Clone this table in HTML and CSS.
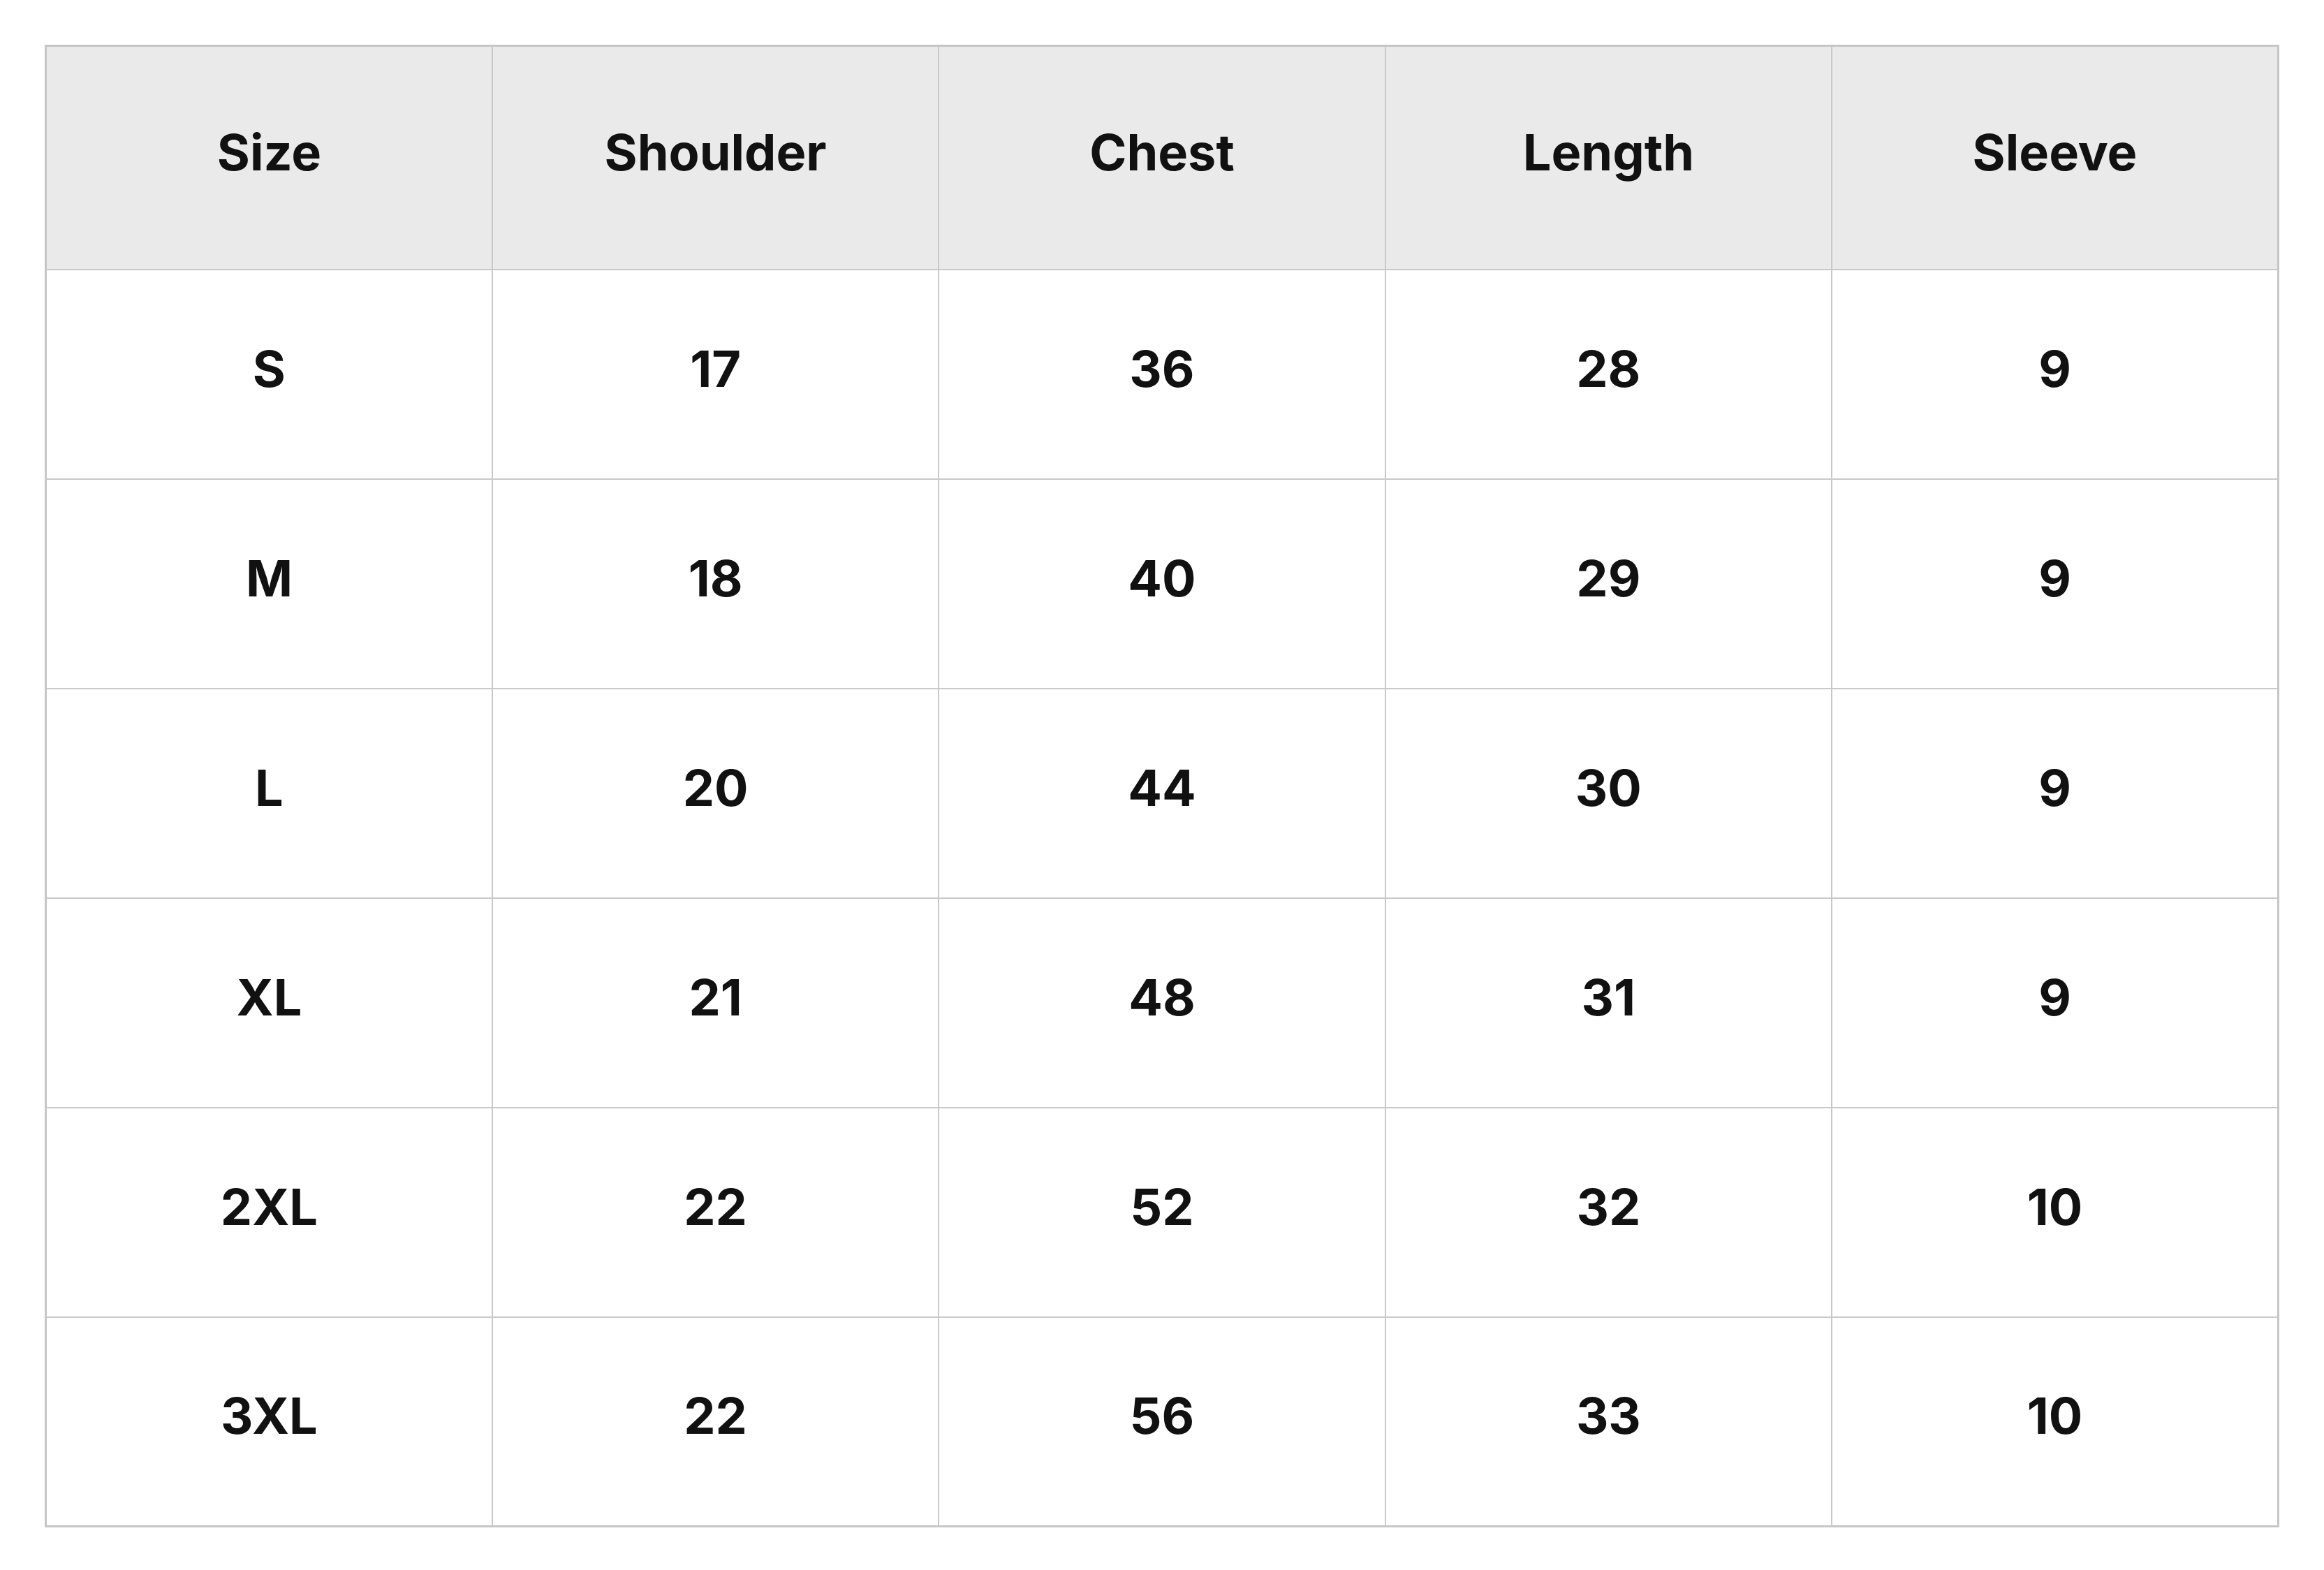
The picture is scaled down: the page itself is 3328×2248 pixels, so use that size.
FILE: index.html
```html
<!DOCTYPE html>
<html lang="en">
<head>
<meta charset="utf-8">
<title>Size Chart</title>
<link rel="stylesheet" href="styles.css">
</head>
<body>
<table class="size-table">
  <thead>
    <tr class="head-row">
      <th>Size</th><th>Shoulder</th><th>Chest</th><th>Length</th><th>Sleeve</th>
    </tr>
  </thead>
  <tbody>
    <tr><td>S</td><td>17</td><td>36</td><td>28</td><td>9</td></tr>
    <tr><td>M</td><td>18</td><td>40</td><td>29</td><td>9</td></tr>
    <tr><td>L</td><td>20</td><td>44</td><td>30</td><td>9</td></tr>
    <tr><td>XL</td><td>21</td><td>48</td><td>31</td><td>9</td></tr>
    <tr><td>2XL</td><td>22</td><td>52</td><td>32</td><td>10</td></tr>
    <tr><td>3XL</td><td>22</td><td>56</td><td>33</td><td>10</td></tr>
  </tbody>
</table>
</body>
</html>
```

FILE: styles.css
```css
html, body {
  margin: 0;
  background: #ffffff;
}
body {
  padding: 64px;
  font-family: Inter, "Liberation Sans", sans-serif;
  color: #111111;
}
.size-table {
  width: 3200px;
  border-collapse: collapse;
  table-layout: fixed;
  border: 3px solid #c6c6c6;
}
.size-table th,
.size-table td {
  border: 2px solid #c9c9c9;
  text-align: center;
  vertical-align: middle;
  font-size: 72px;
  font-weight: 700;
  line-height: 1;
  padding: 0 0 16px 0;
}
.head-row {
  height: 320px;
}
.size-table th {
  background: #eaeaea;
}
.size-table tbody tr {
  height: 300px;
}
```
